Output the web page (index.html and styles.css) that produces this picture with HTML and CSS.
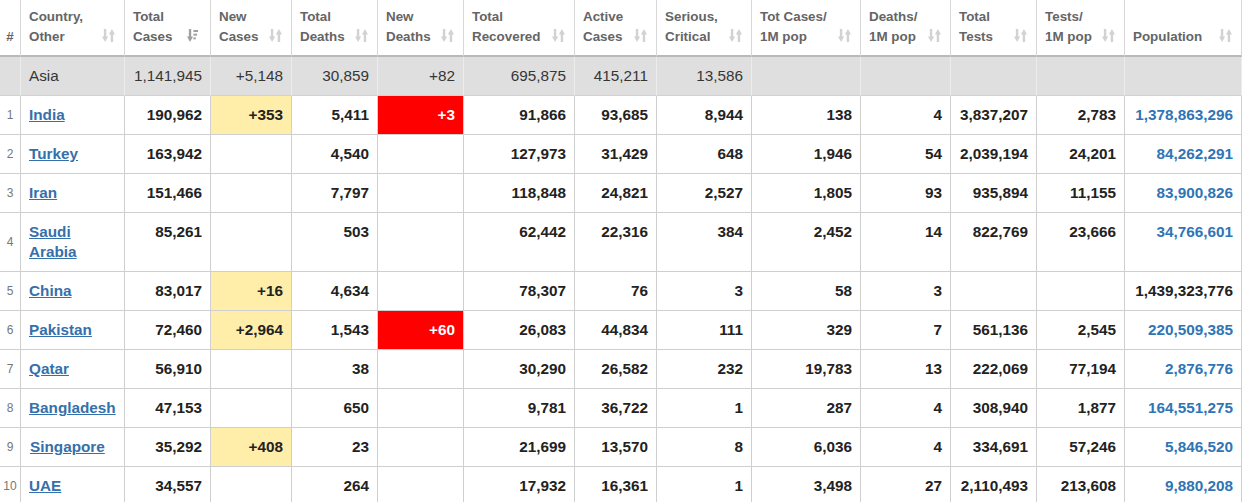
FILE: index.html
```html
<!DOCTYPE html>
<html lang="en">
<head>
<meta charset="utf-8">
<title>Asia</title>
<link rel="stylesheet" href="styles.css">
</head>
<body>
<table class="stats">
  <thead>
    <tr>
      <th class="c-num"><div class="th-in th-center"><span>#</span></div></th>
      <th class="c-country"><div class="th-in"><span>Country,<br>Other</span><svg class="sort" viewBox="0 0 14 14"><rect x="2" y="0" width="2.6" height="9"/><polygon points="0,8 6.6,8 3.3,14"/><polygon points="7.4,6 14,6 10.7,0"/><rect x="9.4" y="5" width="2.6" height="9"/></svg></div></th>
      <th class="c-tc"><div class="th-in"><span>Total<br>Cases</span><svg class="sort sort-active" viewBox="0 0 12 14"><rect x="2" y="0" width="2.6" height="9"/><polygon points="0,8 6.6,8 3.3,14"/><rect x="7" y="1" width="5" height="2.2"/><rect x="7" y="5" width="4" height="2.2"/><rect x="7" y="9" width="2.6" height="2.2"/></svg></div></th>
      <th class="c-nc"><div class="th-in"><span>New<br>Cases</span><svg class="sort" viewBox="0 0 14 14"><rect x="2" y="0" width="2.6" height="9"/><polygon points="0,8 6.6,8 3.3,14"/><polygon points="7.4,6 14,6 10.7,0"/><rect x="9.4" y="5" width="2.6" height="9"/></svg></div></th>
      <th class="c-td"><div class="th-in"><span>Total<br>Deaths</span><svg class="sort" viewBox="0 0 14 14"><rect x="2" y="0" width="2.6" height="9"/><polygon points="0,8 6.6,8 3.3,14"/><polygon points="7.4,6 14,6 10.7,0"/><rect x="9.4" y="5" width="2.6" height="9"/></svg></div></th>
      <th class="c-nd"><div class="th-in"><span>New<br>Deaths</span><svg class="sort" viewBox="0 0 14 14"><rect x="2" y="0" width="2.6" height="9"/><polygon points="0,8 6.6,8 3.3,14"/><polygon points="7.4,6 14,6 10.7,0"/><rect x="9.4" y="5" width="2.6" height="9"/></svg></div></th>
      <th class="c-tr"><div class="th-in"><span>Total<br>Recovered</span><svg class="sort" viewBox="0 0 14 14"><rect x="2" y="0" width="2.6" height="9"/><polygon points="0,8 6.6,8 3.3,14"/><polygon points="7.4,6 14,6 10.7,0"/><rect x="9.4" y="5" width="2.6" height="9"/></svg></div></th>
      <th class="c-ac"><div class="th-in"><span>Active<br>Cases</span><svg class="sort" viewBox="0 0 14 14"><rect x="2" y="0" width="2.6" height="9"/><polygon points="0,8 6.6,8 3.3,14"/><polygon points="7.4,6 14,6 10.7,0"/><rect x="9.4" y="5" width="2.6" height="9"/></svg></div></th>
      <th class="c-sc"><div class="th-in"><span>Serious,<br>Critical</span><svg class="sort" viewBox="0 0 14 14"><rect x="2" y="0" width="2.6" height="9"/><polygon points="0,8 6.6,8 3.3,14"/><polygon points="7.4,6 14,6 10.7,0"/><rect x="9.4" y="5" width="2.6" height="9"/></svg></div></th>
      <th class="c-tcm"><div class="th-in"><span>Tot&nbsp;Cases/<br>1M pop</span><svg class="sort" viewBox="0 0 14 14"><rect x="2" y="0" width="2.6" height="9"/><polygon points="0,8 6.6,8 3.3,14"/><polygon points="7.4,6 14,6 10.7,0"/><rect x="9.4" y="5" width="2.6" height="9"/></svg></div></th>
      <th class="c-dm"><div class="th-in"><span>Deaths/<br>1M pop</span><svg class="sort" viewBox="0 0 14 14"><rect x="2" y="0" width="2.6" height="9"/><polygon points="0,8 6.6,8 3.3,14"/><polygon points="7.4,6 14,6 10.7,0"/><rect x="9.4" y="5" width="2.6" height="9"/></svg></div></th>
      <th class="c-tt"><div class="th-in"><span>Total<br>Tests</span><svg class="sort" viewBox="0 0 14 14"><rect x="2" y="0" width="2.6" height="9"/><polygon points="0,8 6.6,8 3.3,14"/><polygon points="7.4,6 14,6 10.7,0"/><rect x="9.4" y="5" width="2.6" height="9"/></svg></div></th>
      <th class="c-tm"><div class="th-in"><span>Tests/<br>1M pop</span><svg class="sort" viewBox="0 0 14 14"><rect x="2" y="0" width="2.6" height="9"/><polygon points="0,8 6.6,8 3.3,14"/><polygon points="7.4,6 14,6 10.7,0"/><rect x="9.4" y="5" width="2.6" height="9"/></svg></div></th>
      <th class="c-pop"><div class="th-in"><span>Population</span><svg class="sort" viewBox="0 0 14 14"><rect x="2" y="0" width="2.6" height="9"/><polygon points="0,8 6.6,8 3.3,14"/><polygon points="7.4,6 14,6 10.7,0"/><rect x="9.4" y="5" width="2.6" height="9"/></svg></div></th>
    </tr>
  </thead>
  <tbody>
    <tr class="total">
      <td class="num"></td><td class="country">Asia</td><td>1,141,945</td><td>+5,148</td><td>30,859</td><td>+82</td><td>695,875</td><td>415,211</td><td>13,586</td><td></td><td></td><td></td><td></td><td></td>
    </tr>
    <tr>
      <td class="num">1</td><td class="country"><a href="#">India</a></td><td>190,962</td><td class="new">+353</td><td>5,411</td><td class="dead">+3</td><td>91,866</td><td>93,685</td><td>8,944</td><td>138</td><td>4</td><td>3,837,207</td><td>2,783</td><td class="pop">1,378,863,296</td>
    </tr>
    <tr>
      <td class="num">2</td><td class="country"><a href="#">Turkey</a></td><td>163,942</td><td></td><td>4,540</td><td></td><td>127,973</td><td>31,429</td><td>648</td><td>1,946</td><td>54</td><td>2,039,194</td><td>24,201</td><td class="pop">84,262,291</td>
    </tr>
    <tr>
      <td class="num">3</td><td class="country"><a href="#">Iran</a></td><td>151,466</td><td></td><td>7,797</td><td></td><td>118,848</td><td>24,821</td><td>2,527</td><td>1,805</td><td>93</td><td>935,894</td><td>11,155</td><td class="pop">83,900,826</td>
    </tr>
    <tr class="top">
      <td class="num">4</td><td class="country"><a href="#">Saudi<br>Arabia</a></td><td>85,261</td><td></td><td>503</td><td></td><td>62,442</td><td>22,316</td><td>384</td><td>2,452</td><td>14</td><td>822,769</td><td>23,666</td><td class="pop">34,766,601</td>
    </tr>
    <tr>
      <td class="num">5</td><td class="country"><a href="#">China</a></td><td>83,017</td><td class="new">+16</td><td>4,634</td><td></td><td>78,307</td><td>76</td><td>3</td><td>58</td><td>3</td><td></td><td></td><td class="pop pop-plain">1,439,323,776</td>
    </tr>
    <tr>
      <td class="num">6</td><td class="country"><a href="#">Pakistan</a></td><td>72,460</td><td class="new">+2,964</td><td>1,543</td><td class="dead">+60</td><td>26,083</td><td>44,834</td><td>111</td><td>329</td><td>7</td><td>561,136</td><td>2,545</td><td class="pop">220,509,385</td>
    </tr>
    <tr>
      <td class="num">7</td><td class="country"><a href="#">Qatar</a></td><td>56,910</td><td></td><td>38</td><td></td><td>30,290</td><td>26,582</td><td>232</td><td>19,783</td><td>13</td><td>222,069</td><td>77,194</td><td class="pop">2,876,776</td>
    </tr>
    <tr>
      <td class="num">8</td><td class="country"><a href="#">Bangladesh</a></td><td>47,153</td><td></td><td>650</td><td></td><td>9,781</td><td>36,722</td><td>1</td><td>287</td><td>4</td><td>308,940</td><td>1,877</td><td class="pop">164,551,275</td>
    </tr>
    <tr>
      <td class="num">9</td><td class="country"><a href="#" class="indent">Singapore</a></td><td>35,292</td><td class="new">+408</td><td>23</td><td></td><td>21,699</td><td>13,570</td><td>8</td><td>6,036</td><td>4</td><td>334,691</td><td>57,246</td><td class="pop">5,846,520</td>
    </tr>
    <tr>
      <td class="num">10</td><td class="country"><a href="#">UAE</a></td><td>34,557</td><td></td><td>264</td><td></td><td>17,932</td><td>16,361</td><td>1</td><td>3,498</td><td>27</td><td>2,110,493</td><td>213,608</td><td class="pop">9,880,208</td>
    </tr>
  </tbody>
</table>
</body>
</html>
```
FILE: styles.css
```css
html, body {
  margin: 0;
  padding: 0;
  background: #ffffff;
  overflow: hidden;
}

body {
  font-family: "Liberation Sans", Arial, sans-serif;
  color: #222222;
}

.stats {
  border-collapse: separate;
  border-spacing: 0;
  table-layout: fixed;
  width: 1241px;
}

.stats th,
.stats td {
  box-sizing: border-box;
  border-right: 1px solid #cfcfcf;
  border-bottom: 1px solid #cfcfcf;
}

/* column widths (border-box, including right border) */
.c-num { width: 21px; }
.c-country { width: 104px; }
.c-tc { width: 86px; }
.c-nc { width: 81px; }
.c-td { width: 86px; }
.c-nd { width: 86px; }
.c-tr { width: 111px; }
.c-ac { width: 82px; }
.c-sc { width: 95px; }
.c-tcm { width: 109px; }
.c-dm { width: 90px; }
.c-tt { width: 86px; }
.c-tm { width: 88px; }
.c-pop { width: 117px; }

.stats th {
  font-size: 13.4px;
  font-weight: bold;
  line-height: 20px;
  color: #656565;
  text-align: left;
  vertical-align: bottom;
  padding: 7px 8px 8px 8px;
  border-right-color: #d8d8d8;
  border-bottom: 2px solid #b9b9b9;
  background: #ffffff;
}

.stats th.c-num {
  padding: 7px 0 8px 0;
}

.th-in {
  display: flex;
  align-items: flex-end;
  justify-content: space-between;
  gap: 4px;
  white-space: nowrap;
}

.th-center {
  justify-content: center;
}

.sort {
  flex: none;
  width: 13px;
  height: 13px;
  margin-bottom: 5px;
  margin-right: 1px;
  fill: #d2d2d2;
}

.sort-active {
  width: 11px;
  fill: #a0a0a0;
  margin-right: 4px;
}

.stats td {
  font-size: 15.3px;
  font-weight: bold;
  line-height: 20px;
  text-align: right;
  vertical-align: middle;
  padding: 9px 8px 9px 8px;
  white-space: nowrap;
}

.stats td.num {
  font-size: 12px;
  font-weight: normal;
  color: #777777;
  text-align: center;
  padding: 9px 0;
}

.stats td.country {
  text-align: left;
  white-space: normal;
}

.stats tr.top td {
  vertical-align: top;
}

.stats tr.top td.num {
  vertical-align: middle;
}

.stats td.country a {
  color: #3570aa;
  text-decoration: underline;
}

.stats td.country a.indent {
  margin-left: 1px;
}

.stats tr.total td {
  background: #dfdfdf;
  font-weight: normal;
  color: #363636;
  border-right-color: #ececec;
  border-bottom-color: #d2d2d2;
}

.stats td.new {
  background: #ffeeaa;
}

.stats td.dead {
  background: #ff0000;
  color: #ffffff;
}

.stats td.pop {
  color: #2f75b5;
}

.stats td.pop-plain {
  color: #222222;
}
```
